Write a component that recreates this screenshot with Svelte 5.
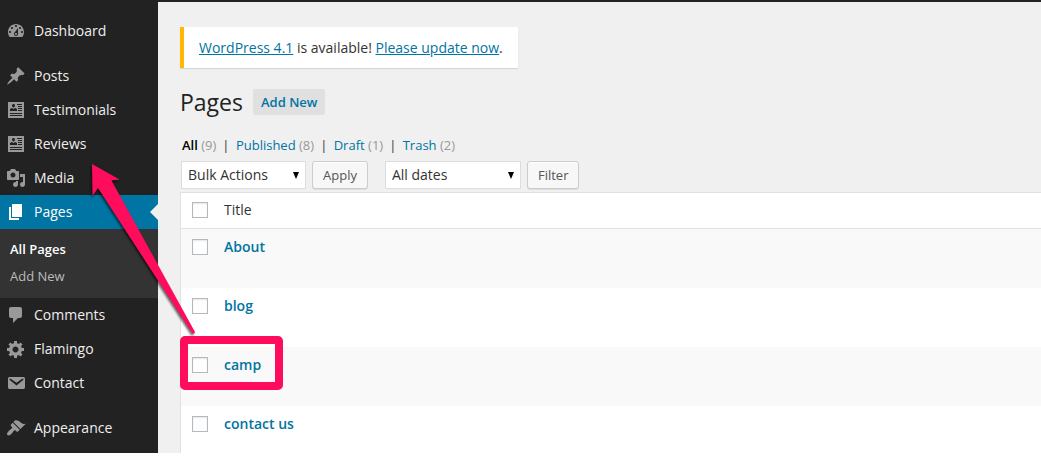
<script>
  const ICONS = {
    dashboard: 'M3.76 16h12.48c1.1-1.37 1.76-3.11 1.76-5 0-4.42-3.58-8-8-8s-8 3.58-8 8c0 1.89.66 3.63 1.76 5zM10 4c.55 0 1 .45 1 1s-.45 1-1 1-1-.45-1-1 .45-1 1-1zM6 6c.55 0 1 .45 1 1s-.45 1-1 1-1-.45-1-1 .45-1 1-1zm8 0c.55 0 1 .45 1 1s-.45 1-1 1-1-.45-1-1 .45-1 1-1zm-5.37 5.55L12 7v6c0 1.1-.9 2-2 2s-2-.9-2-2c0-.57.24-1.08.63-1.45zM4 10c.55 0 1 .45 1 1s-.45 1-1 1-1-.45-1-1 .45-1 1-1zm12 0c.55 0 1 .45 1 1s-.45 1-1 1-1-.45-1-1 .45-1 1-1zm-5 3c0-.55-.45-1-1-1s-1 .45-1 1 .45 1 1 1 1-.45 1-1z',
    pin: 'M10.44 3.02l1.82-1.82 6.36 6.35-1.83 1.82c-1.05-.68-2.48-.57-3.41.36l-.75.75c-.92.93-1.04 2.35-.35 3.41l-1.83 1.82-2.41-2.41-2.8 2.79c-.42.42-3.38 2.71-3.8 2.29s1.86-3.39 2.28-3.81l2.79-2.79L4.1 9.36l1.83-1.82c1.05.69 2.48.57 3.4-.36l.75-.75c.93-.92 1.05-2.35.36-3.41z',
    card: 'M2 2h16v16H2zM7.500 4C6.700 4 6 4.700 6 5.500S6.700 7.500 7.500 7.500 9 6.300 9 5.500 8.300 4 7.500 4zM4 9v2h7V9L9 8 7.500 9 6 8zM11 4v1h5V4zM12 6v1h4V6zM12 8v1h4V8zM12 10v1h4v-1zM4 13v1h12v-1zM4 15v1h12v-1z',
    media: 'M13 11V4c0-.55-.45-1-1-1h-1.67L9 1H5L3.67 3H2c-.55 0-1 .45-1 1v7c0 .55.45 1 1 1h10c.55 0 1-.45 1-1zM7 4.500c1.380 0 2.500 1.120 2.500 2.500S8.380 9.500 7 9.500 4.500 8.380 4.500 7 5.620 4.500 7 4.500zM14 6h5v10.500c0 1.380-1.120 2.500-2.500 2.500S14 17.880 14 16.500s1.120-2.500 2.500-2.500c.17 0 .34.02.5.05V9h-3V6zm-4 8.050V13h2v3.500c0 1.380-1.120 2.500-2.500 2.500S7 17.880 7 16.500 8.120 14 9.500 14c.17 0 .34.02.5.05z',
    pages: 'M6 15V2h10v13H6zm-1 1h8v2H3V5h2v11z',
    comment: 'M5 2h9c1.1 0 2 .9 2 2v7c0 1.1-.9 2-2 2h-2l-5 5v-5H5c-1.1 0-2-.9-2-2V4c0-1.1.9-2 2-2z',
    gear: 'M18 12h-2.18c-.17.7-.44 1.35-.81 1.93l1.54 1.54-2.1 2.1-1.54-1.54c-.58.36-1.23.63-1.91.79V19H8v-2.18c-.68-.16-1.33-.43-1.91-.79l-1.54 1.54-2.12-2.12 1.54-1.54c-.36-.58-.63-1.23-.79-1.91H1V9.03h2.17c.16-.7.44-1.35.8-1.94L2.43 5.55l2.1-2.1 1.54 1.54c.58-.37 1.24-.64 1.93-.81V2h3v2.18c.68.16 1.33.43 1.91.79l1.54-1.54 2.12 2.12-1.54 1.54c.36.59.64 1.24.8 1.94H18V12zm-8.5 1.5c1.66 0 3-1.34 3-3s-1.34-3-3-3-3 1.34-3 3 1.34 3 3 3z',
    mail: 'M3.87 4h13.25C18.37 4 19 4.59 19 5.79v8.42c0 1.19-.63 1.79-1.88 1.79H3.87c-1.25 0-1.88-.6-1.88-1.79V5.79c0-1.2.63-1.79 1.88-1.79zm6.62 8.6l6.74-5.53c.24-.2.43-.66.13-1.07-.29-.41-.82-.42-1.17-.17l-5.7 3.86L4.8 5.83c-.35-.25-.88-.24-1.17.17-.3.41-.11.87.13 1.07z',
    brush: 'M14.48 11.06L7.41 3.99l1.5-1.5c.5-.56 2.3-.47 3.51.32 1.21.8 1.43 1.28 2.91 2.1 1.18.64 2.45 1.26 4.45.85zm-.71.71L6.7 4.7 4.93 6.47c-.39.39-.39 1.02 0 1.41l1.06 1.06c.39.39.39 1.03 0 1.42-.6.6-1.43 1.11-2.21 1.69-.35.26-.7.53-1.01.84C1.43 14.23.4 16.08 1.4 17.07c.99 1 2.84-.03 4.18-1.36.31-.31.58-.66.85-1.02.57-.78 1.08-1.61 1.69-2.21.39-.39 1.02-.39 1.41 0l1.06 1.06c.39.39 1.02.39 1.41 0z',
  };

  // Menu groups are separated by a small gap
  const MENU = [
    [{ label: 'Dashboard', icon: 'dashboard' }],
    [
      { label: 'Posts', icon: 'pin' },
      { label: 'Testimonials', icon: 'card' },
      { label: 'Reviews', icon: 'card' },
      { label: 'Media', icon: 'media' },
      { label: 'Pages', icon: 'pages', sub: ['All Pages', 'Add New'] },
      { label: 'Comments', icon: 'comment' },
      { label: 'Flamingo', icon: 'gear' },
      { label: 'Contact', icon: 'mail' },
    ],
    [{ label: 'Appearance', icon: 'brush' }],
  ];

  const VIEWS = [
    ['All', 9],
    ['Published', 8],
    ['Draft', 1],
    ['Trash', 2],
  ];

  const FILTERS = [
    { label: 'Bulk Actions', options: ['Bulk Actions', 'Edit', 'Move to Trash'], button: 'Apply' },
    { label: 'All dates', options: ['All dates'], button: 'Filter', wide: true },
  ];

  const pages = ['About', 'blog', 'camp', 'contact us'];

  let currentView = $state('All');
  let selected = $state([]);

  function toggleAll(e) {
    selected = e.currentTarget.checked ? [...pages] : [];
  }
</script>

<div class="admin">
  <nav class="sidebar" aria-label="Main menu">
    {#each MENU as group}
      <ul class="group">
        {#each group as item}
          <li>
            <a class="item" class:current={item.sub} href="#{item.icon}">
              <svg class="icon" width="20" height="20" viewBox="0 0 20 20" aria-hidden="true">
                <path d={ICONS[item.icon]} fill="currentColor" fill-rule="evenodd" />
              </svg>
              <span>{item.label}</span>
            </a>
            {#if item.sub}
              <ul class="submenu">
                {#each item.sub as sub, i}
                  <li><a href="#{item.icon}-{i}" class:active={i === 0}>{sub}</a></li>
                {/each}
              </ul>
            {/if}
          </li>
        {/each}
      </ul>
    {/each}
  </nav>

  <main class="content">
    <p class="notice"><a href="#release">WordPress 4.1</a> is available! <a href="#update">Please update now</a>.</p>

    <header class="heading">
      <h1>Pages</h1>
      <a class="add-new" href="#new">Add New</a>
    </header>

    <ul class="views">
      {#each VIEWS as [name, count], i}
        <li>
          {#if i > 0}<span class="bar">|</span>{/if}
          <a href="#{name}" class:active={currentView === name} onclick={() => (currentView = name)}>{name}</a>
          <span class="count">({count})</span>
        </li>
      {/each}
    </ul>

    <div class="tablenav">
      {#each FILTERS as filter}
        <div class="action">
          <div class="select" class:wide={filter.wide}>
            <select aria-label={filter.label}>
              {#each filter.options as option}
                <option>{option}</option>
              {/each}
            </select>
            <svg width="6" height="7" viewBox="0 0 6 7" aria-hidden="true"><path d="M0 0h6L3 7z" /></svg>
          </div>
          <button type="button">{filter.button}</button>
        </div>
      {/each}
    </div>

    <table>
      <thead>
        <tr>
          <th class="check"><input type="checkbox" aria-label="Select all" onchange={toggleAll} /></th>
          <th>Title</th>
        </tr>
      </thead>
      <tbody>
        {#each pages as page}
          <tr>
            <td class="check"><input type="checkbox" aria-label="Select {page}" value={page} bind:group={selected} /></td>
            <td><a href="#{page}">{page}</a></td>
          </tr>
        {/each}
      </tbody>
    </table>
  </main>

  <!-- callout: box around the row, arrow up to the menu -->
  <svg class="callout" width="300" height="400" viewBox="0 0 300 400" aria-hidden="true">
    <path class="arrow" d="M92 164L119.500 179.500L111.500 180.500L195 332Q194 335 192 333L98 188L92.500 196Z" />
    <rect x="184" y="340" width="95" height="46" rx="1" />
  </svg>
</div>

<style>
  :global(body) {
    margin: 0;
    background: #fff;
  }
  .admin {
    position: relative;
    display: grid;
    grid-template-columns: 158px 1fr;
    border-top: 2px solid #222;
    background: #f0f0f0;
    color: #333;
    font-family: "Open Sans", sans-serif;
    font-size: 14px;
    line-height: 20px;
  }
  ul {
    list-style: none;
    margin: 0;
    padding: 0;
  }
  a {
    color: #0074a2;
    text-decoration: none;
  }

  .sidebar {
    display: flex;
    flex-direction: column;
    gap: 11px;
    padding: 12px 0 8px;
    background: #222;
  }
  .item {
    position: relative;
    display: flex;
    align-items: center;
    gap: 8px;
    height: 34px;
    padding-left: 6px;
    color: #eee;
  }
  .icon { color: #999; }
  .item.current {
    background: #0074a2;
    color: #fff;
  }
  .item.current .icon { color: #fff; }
  .item.current::after {
    content: '';
    position: absolute;
    right: 0;
    top: 9px;
    border: 8px solid transparent;
    border-left: 0;
    border-right-color: #f0f0f0;
  }
  .submenu {
    padding: 7px 0 8px;
    background: #333;
  }
  .submenu a {
    display: block;
    padding-left: 10px;
    font-size: 13px;
    line-height: 27px;
    color: #bbb;
  }
  .submenu .active {
    color: #fff;
    font-weight: 600;
  }

  .content {
    min-width: 0;
    padding: 25px 0 0 22px;
  }
  .notice {
    width: fit-content;
    margin: 0;
    padding: 11px 15px 10px;
    border-left: 4px solid #ffba00;
    background: #fff;
    box-shadow: 0 1px 1px rgba(0, 0, 0, 0.1);
  }
  .notice a { text-decoration: underline; }
  .heading {
    display: flex;
    align-items: center;
    gap: 10px;
    margin-top: 19px;
  }
  h1 {
    margin: 0;
    font-size: 23px;
    font-weight: 400;
    line-height: 30px;
    color: #222;
  }
  .add-new {
    padding: 3px 8px;
    border-radius: 2px;
    background: #e0e0e0;
    font-size: 13px;
    font-weight: 600;
  }
  .views {
    display: flex;
    gap: 6px;
    margin: 18px 0 6px;
    padding-left: 2px;
    font-size: 13px;
  }
  .bar { margin-right: 3px; }
  .count { color: #999; }
  .views .active {
    color: #000;
    font-weight: 600;
  }

  .tablenav {
    display: flex;
    gap: 17px;
    padding: 0 0 3px 1px;
  }
  .action {
    display: flex;
    gap: 6px;
  }
  .select {
    display: grid;
    align-items: center;
    width: 125px;
  }
  .select.wide { width: 136px; }
  .select > * { grid-area: 1 / 1; }
  .select svg {
    justify-self: end;
    margin-right: 7px;
    pointer-events: none;
  }
  select {
    appearance: none;
    width: 100%;
    height: 28px;
    padding: 0 6px;
    border: 1px solid #ddd;
    border-radius: 0;
    background: #fff;
    color: #333;
    font: inherit;
  }
  button {
    height: 28px;
    padding: 0 10px;
    border: 1px solid #ccc;
    border-radius: 3px;
    background: #f7f7f7;
    box-shadow: inset 0 1px 0 #fff, 0 1px 0 rgba(0, 0, 0, 0.08);
    color: #555;
    font: inherit;
    font-size: 13px;
  }

  table {
    width: 100%;
    border: 1px solid #e1e1e1;
    border-width: 1px 0 0 1px;
    border-spacing: 0;
    background: #fff;
  }
  th, td {
    padding: 0;
    text-align: left;
    vertical-align: top;
    font-weight: 400;
  }
  th {
    height: 33px;
    padding-bottom: 2px;
    border-bottom: 1px solid #e1e1e1;
    vertical-align: middle;
  }
  td {
    height: 51px;
    padding-top: 8px;
  }
  tbody tr:last-child td { height: 39px; }
  tbody tr:nth-child(odd) { background: #f9f9f9; }
  td a { font-weight: 600; }
  .check {
    width: 32px;
    padding-left: 11px;
  }
  input {
    appearance: none;
    display: block;
    width: 16px;
    height: 16px;
    margin: 0;
    border: 1px solid #b4b9be;
    background: #fff;
    box-shadow: inset 0 1px 2px rgba(0, 0, 0, 0.1);
  }
  td input { margin-top: 2px; }
  input:checked { background: #0074a2; }

  .callout {
    position: absolute;
    top: -2px;
    left: 0;
    pointer-events: none;
  }
  .callout rect {
    fill: none;
    stroke: #ff0c5c;
    stroke-width: 8px;
    stroke-linejoin: round;
  }
  .arrow {
    fill: #ff0c5c;
    filter: drop-shadow(-1px 2px 1px rgba(0, 0, 0, 0.6));
  }
</style>
